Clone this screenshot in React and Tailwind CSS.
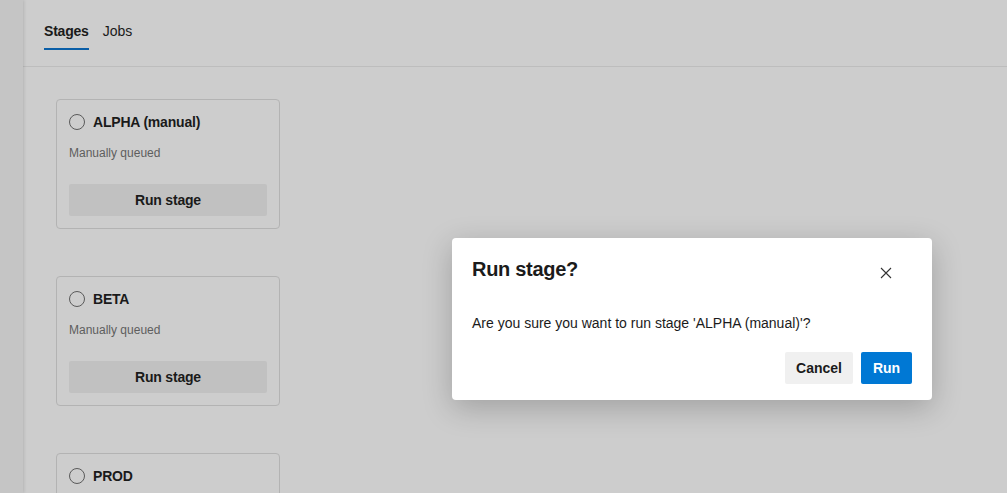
import React from "react";

function Radio() {
  return (
    <span className="inline-block w-4 h-4 rounded-full border-[1.5px] border-[#5a5a5a] shrink-0" />
  );
}

function StageCard({ name, action }) {
  return (
    <div className="shrink-0 w-[224px] border border-[#b3b3b3] rounded-[4px] px-3 pt-[12px] pb-3 bg-[#cdcdcd]">
      <div className="flex items-center gap-2 h-5">
        <Radio />
        <span className="text-[14px] font-semibold text-[#1a1a1a] tracking-[-0.2px]">{name}</span>
      </div>
      {action && (
        <>
          <div className="mt-[13px] text-[12px] text-[#5e5e5e] leading-4">Manually queued</div>
          <button className="mt-[23px] w-full h-8 bg-[#c1c1c1] rounded-[2px] text-[14px] font-semibold text-[#1a1a1a] tracking-[-0.2px]">
            Run stage
          </button>
        </>
      )}
    </div>
  );
}

export default function App() {
  return (
    <div
      className="relative w-[1007px] h-[493px] overflow-hidden flex bg-[#cdcdcd]"
      style={{ fontFamily: '"Segoe UI", "Liberation Sans", Arial, sans-serif' }}
    >
      <div className="w-[23px] shrink-0 bg-[#c5c5c5] shadow-[1px_0_3px_rgba(0,0,0,0.12)] z-10" />
      <div className="flex-1 flex flex-col min-h-0">
        <div className="shrink-0 h-[67px] border-b border-[#bdbdbd] px-[21px] flex items-start">
          <div className="flex gap-[14px] pt-[21px]">
            <div className="flex flex-col">
              <span className="text-[14px] font-semibold text-[#1a1a1a] leading-5 tracking-[-0.2px]">Stages</span>
              <span className="mt-[7px] h-[2px] bg-[#0a5ea7]" />
            </div>
            <span className="text-[14px] text-[#1a1a1a] leading-5">Jobs</span>
          </div>
        </div>
        <div className="flex flex-col gap-[47px] pl-[33px] pt-[32px]">
          <StageCard name="ALPHA (manual)" action />
          <StageCard name="BETA" action />
          <StageCard name="PROD" action />
        </div>
      </div>

      <div className="absolute left-[452px] top-[238px] w-[480px] h-[162px] bg-white rounded-[4px] shadow-[0_8px_30px_rgba(0,0,0,0.22)] px-5 pt-[17px]">
        <div className="flex items-start justify-between">
          <h2 className="text-[20px] font-semibold text-[#1b1b1b] leading-7 tracking-[-0.3px]">Run stage?</h2>
          <button className="mt-[10px] mr-[18px] w-4 h-4 flex items-center justify-center text-[#333]">
            <svg width="12" height="12" viewBox="0 0 12 12" fill="none" stroke="currentColor" strokeWidth="1.1">
              <path d="M1 1 L11 11 M11 1 L1 11" />
            </svg>
          </button>
        </div>
        <p className="mt-[30px] text-[14px] text-[#1b1b1b] leading-5">
          Are you sure you want to run stage 'ALPHA (manual)'?
        </p>
        <div className="mt-[19px] flex justify-end gap-2">
          <button className="h-8 w-[68px] bg-[#f0f0f0] rounded-[2px] text-[14px] font-semibold text-[#1b1b1b]">Cancel</button>
          <button className="h-8 w-[51px] bg-[#0078d4] rounded-[2px] text-[14px] font-semibold text-white">Run</button>
        </div>
      </div>
    </div>
  );
}
